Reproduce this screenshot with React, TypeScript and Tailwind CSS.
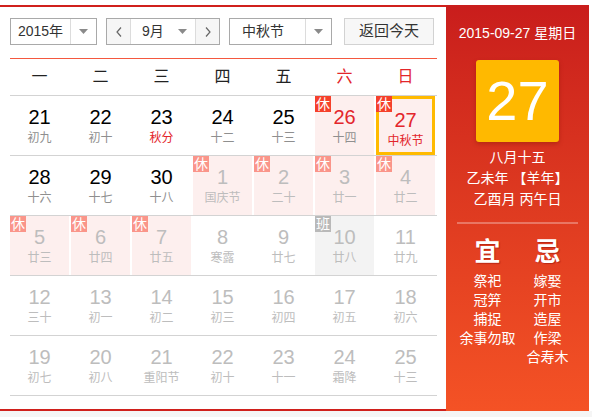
import React from "react";

type Cell = {
  d: number;
  l: string;
  cur?: boolean;
  red?: boolean;
  lred?: boolean;
  badge?: "休" | "班";
  sel?: boolean;
};

const rows: Cell[][] = [
  [
    { d: 21, l: "初九", cur: true },
    { d: 22, l: "初十", cur: true },
    { d: 23, l: "秋分", cur: true, lred: true },
    { d: 24, l: "十二", cur: true },
    { d: 25, l: "十三", cur: true },
    { d: 26, l: "十四", cur: true, red: true, badge: "休" },
    { d: 27, l: "中秋节", cur: true, red: true, lred: true, badge: "休", sel: true },
  ],
  [
    { d: 28, l: "十六", cur: true },
    { d: 29, l: "十七", cur: true },
    { d: 30, l: "十八", cur: true },
    { d: 1, l: "国庆节", badge: "休" },
    { d: 2, l: "二十", badge: "休" },
    { d: 3, l: "廿一", badge: "休" },
    { d: 4, l: "廿二", badge: "休" },
  ],
  [
    { d: 5, l: "廿三", badge: "休" },
    { d: 6, l: "廿四", badge: "休" },
    { d: 7, l: "廿五", badge: "休" },
    { d: 8, l: "寒露" },
    { d: 9, l: "廿七" },
    { d: 10, l: "廿八", badge: "班" },
    { d: 11, l: "廿九" },
  ],
  [
    { d: 12, l: "三十" },
    { d: 13, l: "初一" },
    { d: 14, l: "初二" },
    { d: 15, l: "初三" },
    { d: 16, l: "初四" },
    { d: 17, l: "初五" },
    { d: 18, l: "初六" },
  ],
  [
    { d: 19, l: "初七" },
    { d: 20, l: "初八" },
    { d: 21, l: "重阳节" },
    { d: 22, l: "初十" },
    { d: 23, l: "十一" },
    { d: 24, l: "霜降" },
    { d: 25, l: "十三" },
  ],
];

const FONT = "font-['Liberation_Sans','Noto_Sans_CJK_SC',sans-serif]";

function Caret() {
  return (
    <svg width="9" height="5" viewBox="0 0 9 5">
      <polygon points="0,0 9,0 4.5,5" fill="#8a8a8a" />
    </svg>
  );
}

function Chevron({ dir }: { dir: "l" | "r" }) {
  return (
    <svg width="6" height="10" viewBox="0 0 6 10">
      <polyline
        points={dir === "l" ? "5,0.5 1,5 5,9.5" : "1,0.5 5,5 1,9.5"}
        fill="none"
        stroke="#666"
        strokeWidth="1.2"
      />
    </svg>
  );
}

function DayCell({ c }: { c: Cell }) {
  let bg = "bg-white";
  if (c.badge === "休") bg = "bg-[#fdefee]";
  if (c.badge === "班") bg = "bg-[#f3f3f3]";
  const numColor = c.red ? "text-[#e3262b]" : c.cur ? "text-black" : "text-[#bdbdbd]";
  const lunColor = c.lred ? "text-[#e3262b]" : c.cur ? "text-[#8f8f8f]" : "text-[#bdbdbd]";
  const badgeBg =
    c.badge === "班" ? "bg-[#b9b9b9]" : c.cur ? "bg-[#f5402b]" : "bg-[#fa958a]";
  return (
    <div className="border-b border-[#d3d3d3] pr-[2px] h-[60px]">
      <div
        className={`relative h-[59px] w-[59px] ${bg} flex flex-col items-center pt-[9px] ${
          c.sel ? "border-[3px] border-[#ffba00] pt-[6px]" : ""
        }`}
      >
        {c.badge && (
          <div
            className={`absolute ${c.sel ? "-left-[3px] -top-[3px]" : "left-0 top-0"} w-[16px] h-[16px] ${badgeBg} text-white text-[14px] leading-[16px] text-center`}
          >
            {c.badge}
          </div>
        )}
        <div className={`text-[20px] leading-[24px] ${numColor}`}>{c.d}</div>
        <div className={`text-[12px] leading-[16px] mt-[1px] ${lunColor}`}>{c.l}</div>
      </div>
    </div>
  );
}

export default function App() {
  const weeks = ["一", "二", "三", "四", "五", "六", "日"];
  return (
    <div className={`w-[592px] h-[417px] bg-[#f5f5f5] flex flex-col ${FONT}`}>
      <div className="h-[5px] bg-white" />
      <div className="flex h-[406px] bg-white">
        <div className="w-[446px] border-t-2 border-b-2 border-[#d0201c] pl-[10px] pr-[9px] pt-[11px]">
          {/* controls */}
          <div className="flex h-[27px] text-[14px] text-[#333]">
            <div className="flex w-[87px] border border-[#a9a9a9] bg-white">
              <div className="flex-1 flex items-center justify-center">2015年</div>
              <div className="w-[26px] border-l border-[#dcdcdc] flex items-center justify-center">
                <Caret />
              </div>
            </div>
            <div className="flex w-[114px] ml-[9px] border border-[#a9a9a9] bg-white">
              <div className="w-[24px] bg-[#f6f6f6] border-r border-[#dcdcdc] flex items-center justify-center">
                <Chevron dir="l" />
              </div>
              <div className="flex-1 flex items-center pl-[11px] pr-[8px] justify-between">
                <span>9月</span>
                <Caret />
              </div>
              <div className="w-[24px] bg-[#f6f6f6] border-l border-[#dcdcdc] flex items-center justify-center">
                <Chevron dir="r" />
              </div>
            </div>
            <div className="flex w-[103px] ml-[9px] border border-[#a9a9a9] bg-white">
              <div className="flex-1 flex items-center pl-[12px]">中秋节</div>
              <div className="w-[26px] border-l border-[#dcdcdc] flex items-center justify-center">
                <Caret />
              </div>
            </div>
            <div className="w-[90px] ml-[12px] border border-[#d2d2d2] bg-[#f7f7f7] flex items-center justify-center text-[15px]">
              返回今天
            </div>
          </div>
          {/* header */}
          <div className="mt-[13px] grid grid-cols-7 border-t border-[#f4583f] border-b border-b-[#d3d3d3] h-[38px]">
            {weeks.map((w, i) => (
              <div
                key={w}
                className={`flex items-center justify-center text-[16px] pr-[2px] ${
                  i >= 5 ? "text-[#e3262b]" : "text-[#222]"
                }`}
              >
                {w}
              </div>
            ))}
          </div>
          {/* grid */}
          <div className="grid grid-cols-7">
            {rows.map((r, ri) =>
              r.map((c, ci) => <DayCell key={`${ri}-${ci}`} c={c} />)
            )}
          </div>
        </div>
        <div className="w-[143px] bg-linear-to-b from-[#c91d1c] to-[#f45225] flex flex-col items-center text-white pt-[18px]">
          <div className="text-[14px] leading-[20px]">2015-09-27 星期日</div>
          <div className="mt-[17px] w-[83px] h-[82px] rounded-[3px] bg-[#ffb900] shadow-[0_2px_4px_rgba(120,20,0,0.35)] flex items-center justify-center text-[56px] leading-none">
            27
          </div>
          <div className="mt-[5px] text-[14px] leading-[21px] text-center">
            <div>八月十五</div>
            <div>乙未年 【羊年】</div>
            <div>乙酉月 丙午日</div>
          </div>
          <div className="mt-[12px] w-[121px] h-[2px] bg-[rgba(255,255,255,0.3)]" />
          <div className="mt-[13px] flex w-[120px]">
            <div className="w-[60px] flex flex-col items-center">
              <div className="text-[26px] leading-[30px] font-bold [text-shadow:1px_1px_1px_rgba(120,0,0,0.4)]">宜</div>
              <div className="mt-[5px] text-[14px] leading-[19px] text-center">
                <div>祭祀</div>
                <div>冠笄</div>
                <div>捕捉</div>
                <div>余事勿取</div>
              </div>
            </div>
            <div className="w-[60px] flex flex-col items-center">
              <div className="text-[26px] leading-[30px] font-bold [text-shadow:1px_1px_1px_rgba(120,0,0,0.4)]">忌</div>
              <div className="mt-[5px] text-[14px] leading-[19px] text-center">
                <div>嫁娶</div>
                <div>开市</div>
                <div>造屋</div>
                <div>作梁</div>
                <div>合寿木</div>
              </div>
            </div>
          </div>
        </div>
      </div>
    </div>
  );
}
